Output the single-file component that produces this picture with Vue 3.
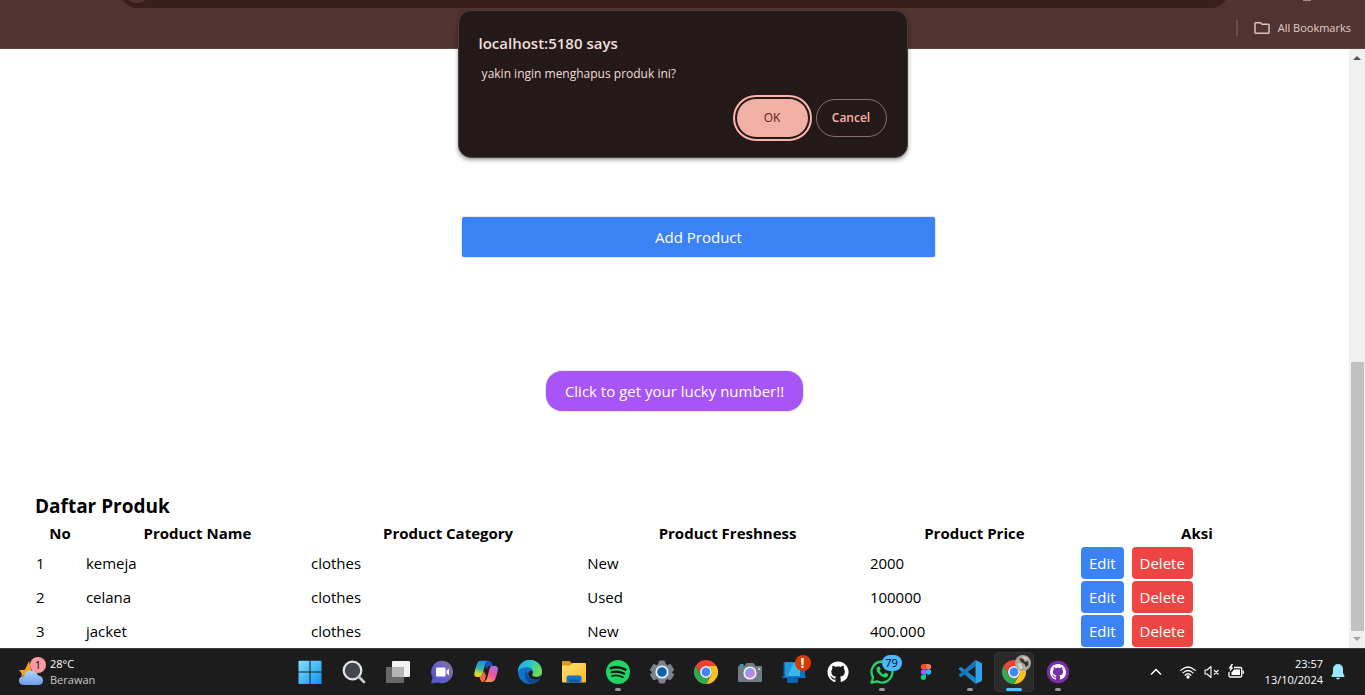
<script setup>
import { ref } from 'vue'

const products = ref([
  { name: 'kemeja', category: 'clothes', freshness: 'New', price: '2000' },
  { name: 'celana', category: 'clothes', freshness: 'Used', price: '100000' },
  { name: 'jacket', category: 'clothes', freshness: 'New', price: '400.000' },
])

const githubMark =
  'M8 0C3.58 0 0 3.58 0 8c0 3.54 2.29 6.53 5.47 7.59.4.07.55-.17.55-.38 0-.19-.01-.82-.01-1.49-2.01.37-2.53-.49-2.69-.94-.09-.23-.48-.94-.82-1.13-.28-.15-.68-.52-.01-.53.63-.01 1.08.58 1.23.82.72 1.21 1.87.87 2.33.66.07-.52.28-.87.51-1.07-1.78-.2-3.64-.89-3.64-3.95 0-.87.31-1.59.82-2.15-.08-.2-.36-1.02.08-2.12 0 0 .67-.21 2.2.82.64-.18 1.32-.27 2-.27s1.36.09 2 .27c1.53-1.04 2.2-.82 2.2-.82.44 1.1.16 1.92.08 2.12.51.56.82 1.27.82 2.15 0 3.07-1.87 3.75-3.65 3.95.29.25.54.73.54 1.48 0 1.07-.01 1.93-.01 2.2 0 .21.15.46.55.38A8.01 8.01 0 0 0 16 8c0-4.42-3.58-8-8-8Z'
</script>

<template>
  <div class="screen">
    <header class="chrome">
      <div class="toolbar">
        <div class="omnibox"><span class="site-info"></span></div>
        <span class="menu-dot"></span>
      </div>
      <nav class="bookmarks">
        <span class="divider"></span>
        <button class="all-bookmarks" type="button">
          <svg width="16" height="12" viewBox="0 0 16 12" fill="none" stroke="#dcc4be" stroke-width="1.5" stroke-linejoin="round">
            <path d="M1 1.5V10.5Q1 11.2 1.700 11.2H14.300Q15 11.2 15 10.5V3Q15 2.300 14.300 2.300H8L6.500 .8H1.700Q1 .8 1 1.500Z" />
          </svg>
          All Bookmarks
        </button>
      </nav>
    </header>

    <div class="viewport">
      <main class="page">
        <form class="product-form" @submit.prevent>
          <button class="add" type="submit">Add Product</button>
        </form>
        <button class="lucky" type="button">Click to get your lucky number!!</button>
        <section class="listing">
          <h2>Daftar Produk</h2>
          <table>
            <colgroup>
              <col class="c-no" /><col class="c-name" /><col class="c-category" />
              <col class="c-fresh" /><col class="c-price" /><col class="c-action" />
            </colgroup>
            <thead>
              <tr>
                <th>No</th>
                <th>Product Name</th>
                <th>Product Category</th>
                <th>Product Freshness</th>
                <th>Product Price</th>
                <th>Aksi</th>
              </tr>
            </thead>
            <tbody>
              <tr v-for="(p, i) in products" :key="p.name">
                <td>{{ i + 1 }}</td>
                <td>{{ p.name }}</td>
                <td>{{ p.category }}</td>
                <td>{{ p.freshness }}</td>
                <td>{{ p.price }}</td>
                <td>
                  <div class="actions">
                    <button class="edit" type="button">Edit</button>
                    <button class="delete" type="button">Delete</button>
                  </div>
                </td>
              </tr>
            </tbody>
          </table>
        </section>
      </main>
      <div class="scrollbar">
        <svg class="arrow" viewBox="0 0 16 17"><path d="M4 11L8 7L12 11Z" fill="#505050" /></svg>
        <div class="track"><div class="thumb"></div></div>
        <svg class="arrow" viewBox="0 0 16 17"><path d="M4 6L8 10L12 6Z" fill="#a3a3a3" /></svg>
      </div>
    </div>

    <footer class="taskbar">
      <button class="weather" type="button">
        <span class="weather-icon">
          <svg width="26" height="30" viewBox="0 0 26 30">
            <defs>
              <linearGradient id="cloud" x1="0" y1="0" x2="0" y2="1">
                <stop offset="0" stop-color="#b4d2fb" /><stop offset="1" stop-color="#6f9be8" />
              </linearGradient>
            </defs>
            <path d="M11 4L8.500 9.500L6.500 13L1 13L4 17L3 19.500L14 16Z" fill="#f5a11c" />
            <path d="M6.500 28Q1 28 1 23.500Q1 19.500 6 19Q7 13.500 13 13.500Q18.500 13.500 20 18.500Q25 19 25 23.500Q25 28 19.500 28Z" fill="url(#cloud)" />
          </svg>
          <span class="weather-badge">1</span>
        </span>
        <span class="weather-text"><span class="temp">28°C</span><span>Berawan</span></span>
      </button>

      <div class="apps">
        <button type="button" aria-label="Start">
          <svg viewBox="0 0 24 24">
            <defs>
              <linearGradient id="win" x1="0" y1="0" x2="1" y2="1">
                <stop offset="0" stop-color="#85e0fd" /><stop offset="1" stop-color="#0c93f2" />
              </linearGradient>
            </defs>
            <path d="M.5 1.500Q.5 .8 1.300 .8H11.500V11.500H.5ZM12.500 .8H22.700Q23.500 .8 23.500 1.500V11.500H12.500ZM.5 12.500H11.500V24H1.300Q.5 24 .5 23.200ZM12.500 12.500H23.500V23.200Q23.500 24 22.700 24H12.500Z" fill="url(#win)" />
          </svg>
        </button>
        <button type="button" aria-label="Search">
          <svg viewBox="0 0 24 24">
            <circle cx="10.500" cy="10.500" r="8.800" fill="#42464a" stroke="#e2e5e8" stroke-width="2.200" />
            <path d="M17 17L22 22" stroke="#c3c7ca" stroke-width="2.800" stroke-linecap="round" />
          </svg>
        </button>
        <button type="button" aria-label="Task view">
          <svg viewBox="0 0 24 24">
            <rect x="6" y="1" width="18" height="16" rx="1" fill="#f2f2f2" />
            <rect x="0" y="7" width="18" height="16" rx="1" fill="#686868" />
            <path d="M6 7H17Q18 7 18 8V17H6Z" fill="#b5b5b5" />
          </svg>
        </button>
        <button type="button" aria-label="Chat">
          <svg viewBox="0 0 24 24">
            <defs>
              <linearGradient id="chat" x1="1" y1="0" x2="0" y2="1">
                <stop offset="0" stop-color="#8f6fa8" /><stop offset=".5" stop-color="#6760c8" /><stop offset="1" stop-color="#4f56c5" />
              </linearGradient>
            </defs>
            <path d="M12.500 .8A11.200 11.200 0 1 1 8 22.500L1.800 23.500Q1 23.500 1.200 22.500L2.600 17.500A11.200 11.200 0 0 1 12.500 .8Z" fill="url(#chat)" />
            <rect x="6" y="7.500" width="9.500" height="9" rx="1.200" fill="#fff" />
            <path d="M16.500 10.800L19 8.500V15.500L16.500 13.200Z" fill="#fff" />
          </svg>
        </button>
        <button type="button" aria-label="Copilot">
          <svg viewBox="0 0 24 24">
            <defs>
              <linearGradient id="cop1" x1=".5" y1="0" x2=".3" y2="1">
                <stop offset="0" stop-color="#168de8" /><stop offset=".5" stop-color="#37b9a0" /><stop offset=".8" stop-color="#d5d934" /><stop offset="1" stop-color="#ffc21a" />
              </linearGradient>
              <linearGradient id="cop2" x1=".8" y1="0" x2=".2" y2="1">
                <stop offset="0" stop-color="#a66cf0" /><stop offset=".5" stop-color="#f0549c" /><stop offset="1" stop-color="#ff9b48" />
              </linearGradient>
            </defs>
            <path d="M11 6L13.500 .8Q17 .8 18 4L18.600 6H15.500Q13.500 6 12.700 9Z" fill="#1650c0" />
            <path d="M6.500 .8H14Q12 1.500 11 5L8.500 14Q7.700 17 5 17H3Q0 17 .3 13.500Q.8 9.500 3 4Q4 .8 6.500 .8Z" fill="url(#cop1)" />
            <path d="M17.500 6H21Q24 6 23.900 9.500Q23.500 13.500 21.300 19Q20 22 17.500 22H10.500Q12.300 21 13.300 17.500L15.500 9Q16 6.500 17.500 6Z" fill="url(#cop2)" />
            <path d="M5.500 17Q8 16.800 8.800 14L9.500 11L12 15.500L11 19.500Q10.500 22 8.800 22Q7 22 6.300 19.500Z" fill="#f26a4c" />
          </svg>
        </button>
        <button type="button" aria-label="Edge">
          <svg viewBox="0 0 24 24">
            <defs>
              <linearGradient id="edge1" x1="0" y1="0" x2="1" y2=".4">
                <stop offset="0" stop-color="#1ba5e4" /><stop offset=".5" stop-color="#2cc5d2" /><stop offset="1" stop-color="#6ddd4c" />
              </linearGradient>
            </defs>
            <circle cx="12" cy="12" r="12" fill="#1272c8" />
            <path d="M0 11.500A12 12 0 0 1 24 12Q24 17 18.500 17Q14 17 14 14.800Q15.500 13.500 15 11Q14 7.500 9.500 7Q3 7 0 11.500Z" fill="url(#edge1)" />
            <path d="M8 12.500Q8 8.500 11.500 8.200Q6.500 9.500 6.800 15Q7.500 21 13.500 23.900Q9 23 7.500 19.500Q6 16 8 12.500Z" fill="#0d4f9d" />
            <path d="M9.300 12Q8.500 19 16 19.800Q19.500 20 22.300 18.200Q19 23.800 13 24Q7.500 20.500 7.500 15.500Q7.600 13 9.300 12Z" fill="#114a8f" />
            <path d="M14 14.500Q14 17 18.500 17Q21.500 17 23.200 15L22.200 18.200Q19.500 20 16 19.500Q10 18.500 10.200 13Q11 10.500 13.500 10.500Q15.800 12 14 14.500Z" fill="#1e1e1e" />
          </svg>
        </button>
        <button type="button" aria-label="File Explorer">
          <svg viewBox="0 0 24 24">
            <defs>
              <linearGradient id="folder" x1="0" y1="0" x2="1" y2="1">
                <stop offset="0" stop-color="#ffe27a" /><stop offset="1" stop-color="#fdb81e" />
              </linearGradient>
            </defs>
            <path d="M0 2Q0 1 1 1H7.500L10.500 4H23Q24 4 24 5V10H0Z" fill="#d9990f" />
            <path d="M0 5.500H8L10.500 3H23Q24 3 24 4V21.500Q24 22.500 23 22.500H1Q0 22.500 0 21.500Z" fill="url(#folder)" />
            <path d="M4.500 22.500V17.500Q4.500 15.500 6.500 15.500H17.500Q19.500 15.500 19.500 17.500V22.500Z" fill="#1576c9" />
            <path d="M7.500 19.500H16.500Q17 19.500 17 20V22.500H7V20Q7 19.500 7.500 19.500Z" fill="#0f569d" />
          </svg>
        </button>
        <button type="button" aria-label="Spotify">
          <svg viewBox="0 0 24 24">
            <circle cx="12" cy="12" r="12" fill="#1ed760" />
            <g fill="none" stroke="#111" stroke-linecap="round">
              <path d="M4.800 8.200Q12.500 5.900 19.500 9.700" stroke-width="2.500" />
              <path d="M5.500 12.300Q12 10.400 18.200 13.600" stroke-width="2.100" />
              <path d="M6 16Q11.800 14.500 16.900 17.200" stroke-width="1.700" />
            </g>
          </svg>
          <i class="running"></i>
        </button>
        <button type="button" aria-label="Settings">
          <svg viewBox="0 0 24 24">
            <path d="M9.500 1H14.500L15.300 4.300L17.300 5.500L20.500 4.500L23.800 10L21.300 12.300L23.800 14.500L20.500 19.800L17.300 18.700L15.300 19.800L14.500 23H9.500L8.700 19.800L6.700 18.700L3.500 19.800L.2 14.500L2.700 12.300L.2 10L3.500 4.500L6.700 5.500L8.700 4.300Z" fill="#7b838c" stroke="#7b838c" stroke-linejoin="round" />
            <circle cx="12" cy="12" r="5.700" fill="#0d5fb0" stroke="#eef1f4" stroke-width="1.800" />
          </svg>
        </button>
        <button type="button" aria-label="Chrome">
          <svg viewBox="0 0 24 24">
            <path d="M1.600 6A12 12 0 0 1 22.400 6H12A6 6 0 0 0 6.800 15Z" fill="#ea4335" />
            <path d="M22.400 6A12 12 0 0 1 12 24L17.200 15A6 6 0 0 0 12 6Z" fill="#fbc116" />
            <path d="M12 24A12 12 0 0 1 1.600 6L6.800 15A6 6 0 0 0 17.200 15Z" fill="#34a853" />
            <circle cx="12" cy="12" r="5.200" fill="#4285f4" stroke="#fff" stroke-width="1.500" />
          </svg>
        </button>
        <button type="button" aria-label="Camera">
          <svg viewBox="0 0 24 24">
            <defs>
              <linearGradient id="lens" x1="0" y1="0" x2="1" y2="1">
                <stop offset="0" stop-color="#53b7f1" /><stop offset=".5" stop-color="#a98de8" /><stop offset="1" stop-color="#ed79d8" />
              </linearGradient>
            </defs>
            <path d="M1.500 6Q1.500 4 3.500 4H5.500V7H1.500Z" fill="#31a6e4" />
            <path d="M0 7Q0 6 1 6H6.500L8 3.500Q8.300 3 9 3H15Q15.700 3 16 3.500L17.500 6H23Q24 6 24 7V21Q24 22 23 22H1Q0 22 0 21Z" fill="#727c86" />
            <circle cx="21" cy="9" r="1" fill="#d2d7dc" />
            <circle cx="12" cy="13" r="5.800" fill="url(#lens)" stroke="#f2f4f7" stroke-width="1.600" />
          </svg>
        </button>
        <button type="button" aria-label="Phone Link">
          <svg viewBox="0 0 24 24">
            <rect x="1.500" y="2" width="12" height="15" rx="1" fill="#1167b3" />
            <path d="M17 5H22Q23 5 23 6V16L24 18H0V16.500H17Z" fill="#1370c4" />
            <rect x="3" y="2.500" width="15" height="14" rx="1" fill="#38b7eb" />
            <path d="M3 3.500Q3 2.500 4 2.500H12L5 16.500H3Z" fill="#1f95de" />
            <path d="M5 16.500H16V22Q16 23 15 23H6Q5 23 5 22Z" fill="#0c64b4" />
          </svg>
          <span class="badge alert">!</span>
        </button>
        <button type="button" aria-label="GitHub">
          <svg viewBox="0 0 24 24">
            <path :d="githubMark" fill="#fff" transform="translate(1.500 1.500) scale(1.320)" />
          </svg>
        </button>
        <button type="button" aria-label="WhatsApp">
          <svg viewBox="0 0 24 24">
            <path d="M12 1.500A10.500 10.500 0 1 1 7 21.300L1.500 22.700L3 17.300A10.500 10.500 0 0 1 12 1.500Z" fill="none" stroke="#25d366" stroke-width="2.300" stroke-linejoin="round" />
            <path d="M8 6.500Q9.500 6 10 7.500L10.600 9Q10.700 9.700 9.700 10.700Q11 13.300 13.700 14.400L15 13Q15.400 12.700 16 13L18 14Q18.400 14.300 18 15.500Q17.200 17.500 15 17.400Q9.500 16.600 6.700 10.800Q5.700 8.300 8 6.500Z" fill="#25d366" />
          </svg>
          <span class="badge count">79</span>
          <i class="running"></i>
        </button>
        <button type="button" aria-label="Figma">
          <svg viewBox="0 0 24 24">
            <path d="M9.500 4H12V9.300H9.500A2.650 2.650 0 0 1 9.500 4Z" fill="#f24e1e" />
            <path d="M12 4H14.500A2.650 2.650 0 0 1 14.500 9.300H12Z" fill="#ff7262" />
            <path d="M9.500 9.300H12V14.600H9.500A2.650 2.650 0 0 1 9.500 9.300Z" fill="#a259ff" />
            <circle cx="14.600" cy="12" r="2.650" fill="#1abcfe" />
            <path d="M9.500 14.600H12V17.300A2.650 2.650 0 1 1 9.500 14.600Z" fill="#0acf83" />
          </svg>
        </button>
        <button type="button" aria-label="Visual Studio Code">
          <svg viewBox="0 0 24 24">
            <path d="M17.500 24L1 9.500Q.4 8.900 1 8.300L2.200 7.200Q2.800 6.800 3.400 7.200L17.500 17.700Z" fill="#1f83ca" />
            <path d="M1 15.700L2.200 16.800Q2.800 17.200 3.400 16.800L17.500 6.300V0L1 14.500Q.4 15.100 1 15.700Z" fill="#1677b8" />
            <path d="M17.500 0L23.200 2.700Q24 3.100 24 4V20Q24 20.900 23.200 21.300L17.500 24Z" fill="#2ea3ea" />
          </svg>
          <i class="running"></i>
        </button>
        <button type="button" class="active" aria-label="Chrome window">
          <svg viewBox="0 0 24 24">
            <path d="M1.600 6A12 12 0 0 1 22.400 6H12A6 6 0 0 0 6.800 15Z" fill="#ea4335" />
            <path d="M22.400 6A12 12 0 0 1 12 24L17.200 15A6 6 0 0 0 12 6Z" fill="#fbc116" />
            <path d="M12 24A12 12 0 0 1 1.600 6L6.800 15A6 6 0 0 0 17.200 15Z" fill="#34a853" />
            <circle cx="12" cy="12" r="5.200" fill="#4285f4" stroke="#fff" stroke-width="1.500" />
          </svg>
          <svg class="profile" viewBox="0 0 16 16">
            <circle cx="8" cy="8" r="8" fill="#aca79b" />
            <path d="M4 3L8 4L10 7L13 6L13.500 10L11 12L9.500 9L6 7Z" fill="#34332f" />
            <path d="M8 1L13 3L11.500 5L8.500 3ZM2 8L6 8.500L8 13L5 14.500Z" fill="#d5d0c4" />
          </svg>
          <i class="running"></i>
        </button>
        <button type="button" aria-label="GitHub Desktop">
          <svg viewBox="0 0 24 24">
            <circle cx="12" cy="12" r="11.200" fill="#7a2fa5" />
            <path :d="githubMark" fill="#fff" transform="translate(4 4)" />
          </svg>
          <i class="running"></i>
        </button>
      </div>

      <div class="tray">
        <button type="button" class="chevron" aria-label="Hidden icons">
          <svg width="12" height="8" viewBox="0 0 12 8"><path d="M1 6.500L6 1.500L11 6.500" fill="none" stroke="#fff" stroke-width="1.500" /></svg>
        </button>
        <button type="button" class="status" aria-label="Network, sound and battery">
          <svg width="16" height="16" viewBox="0 0 16 16" fill="none" stroke="#fff" stroke-width="1.300" stroke-linecap="round">
            <path d="M.8 6.400Q8-.5 15.200 6.400M3 8.900Q8 4 13 8.900M5.200 11.200Q8 8.400 10.800 11.200" />
            <circle cx="8" cy="13" r="1" fill="#fff" />
          </svg>
          <svg width="16" height="16" viewBox="0 0 16 16" fill="none" stroke="#fff" stroke-width="1.100" stroke-linejoin="round">
            <path d="M1 6H3L7 2.500V13.500L3 10H1ZM10 6L14.500 10.500M14.500 6L10 10.500" />
          </svg>
          <svg width="16" height="16" viewBox="0 0 16 16" fill="none" stroke="#fff" stroke-width="1.300">
            <path d="M6 3.500H12.500Q13.700 3.500 13.700 5V11.500Q13.700 13 12.500 13H2.500Q1 13 1 11.500V8" />
            <path d="M6 5.500H12V11H3.500V8.500Z" fill="#fff" stroke="none" />
            <path d="M15.200 6.500V10" />
            <path d="M3.500 0L.5 4.500H2.500L1.500 8L5.500 3.500H3.500L5 0Z" fill="#fff" stroke="none" />
          </svg>
        </button>
        <button type="button" class="clock"><span>23:57</span><span>13/10/2024</span></button>
        <button type="button" class="bell" aria-label="Notifications">
          <svg width="14" height="16" viewBox="0 0 14 16" fill="#98e8ff">
            <path d="M7 0A5 5 0 0 1 12 5V9L13.500 12Q13.500 13 12.800 13H1.200Q.5 13 .5 12L2 9V5A5 5 0 0 1 7 0ZM4.800 13.800H9.200Q8.500 15.500 7 15.500Q5.500 15.500 4.800 13.800Z" />
          </svg>
        </button>
      </div>
    </footer>

    <div class="dialog" role="alertdialog" aria-labelledby="dlg-title" aria-describedby="dlg-text">
      <h1 id="dlg-title">localhost:5180 says</h1>
      <p id="dlg-text">&nbsp;yakin ingin menghapus produk ini?</p>
      <div class="dialog-actions">
        <button class="ok" type="button">OK</button>
        <button class="cancel" type="button">Cancel</button>
      </div>
    </div>
  </div>
</template>

<style>
body {
  background: #fff;
}
</style>

<style scoped>
.screen {
  position: relative;
  display: flex;
  flex-direction: column;
  height: 100vh;
  overflow: hidden;
  font-family: "Open Sans", "Noto Sans", sans-serif;
  font-size: 15px;
  line-height: 24px;
  color: #000;
}
* {
  box-sizing: border-box;
}
button {
  font: inherit;
  color: inherit;
  background: none;
  border: 0;
  padding: 0;
  margin: 0;
}
svg {
  display: block;
}

/* Browser chrome */
.chrome {
  background: #51342f;
  border-bottom: 1px solid #5c4440;
}
.toolbar {
  display: flex;
  align-items: flex-end;
  height: 8px;
  padding: 0 54px 0 120px;
  overflow: hidden;
}
.omnibox {
  display: flex;
  align-items: center;
  flex: 1;
  height: 34px;
  padding: 0 4px;
  border-radius: 17px;
  background: #3a1e1a;
}
.site-info {
  width: 26px;
  height: 24px;
  border-radius: 12px;
  background: #51342f;
}
.menu-dot {
  align-self: flex-start;
  width: 8px;
  height: 1px;
  margin-left: 75px;
  background: #a98b84;
}
.bookmarks {
  display: flex;
  align-items: center;
  justify-content: flex-end;
  gap: 16px;
  height: 40px;
  padding-right: 14px;
}
.divider {
  width: 2px;
  height: 16px;
  background: #6f4c46;
}
.all-bookmarks {
  display: flex;
  align-items: center;
  gap: 8px;
  font-size: 11px;
  color: #e4d0cb;
}

/* Page */
.viewport {
  display: flex;
  flex: 1;
  min-height: 0;
}
.page {
  display: flex;
  flex: 1;
  flex-direction: column;
  align-items: center;
  min-width: 0;
  padding-top: 168px;
  overflow: hidden;
}
.product-form {
  display: flex;
  justify-content: center;
  align-self: stretch;
  padding-left: 48px;
}
.add {
  width: 473px;
  height: 40px;
  border-radius: 2px;
  background: #3b82f6;
  color: #fff;
  box-shadow: 0 0 0 1px #e5e7eb;
}
.lucky {
  height: 40px;
  margin-top: 114px;
  padding: 0 19px;
  border-radius: 16px;
  background: #a855f7;
  color: #fff;
  box-shadow: 0 0 0 1px #e5e7eb;
}
.listing {
  align-self: stretch;
  margin-top: 82px;
  padding: 0 35px;
}
h2 {
  margin: 0;
  font-size: 19px;
  font-weight: 700;
  line-height: 27px;
}
table {
  width: 100%;
  table-layout: fixed;
  border-collapse: collapse;
}
th,
td {
  padding: 1px;
}
th {
  font-weight: 700;
}
.c-no { width: 3.9%; }
.c-name { width: 17.6%; }
.c-category { width: 21.6%; }
.c-fresh { width: 22.1%; }
.c-price { width: 16.5%; }
.c-action { width: 18.3%; }
.actions {
  display: flex;
  gap: 8px;
}
.edit,
.delete {
  height: 32px;
  padding: 0 8px;
  border-radius: 4px;
  color: #fff;
}
.edit {
  background: #3b82f6;
}
.delete {
  background: #ef4444;
}
.scrollbar {
  display: flex;
  flex-direction: column;
  width: 16px;
  background: #f0f0f0;
}
.arrow {
  height: 17px;
}
.track {
  display: flex;
  flex: 1;
  flex-direction: column;
  justify-content: flex-end;
  padding: 0 1px 0 2px;
}
.thumb {
  height: 47.6%;
  background: #c1c1c1;
}

/* Taskbar */
.taskbar {
  display: grid;
  grid-template-columns: 1fr auto 1fr;
  height: 47px;
  padding-left: 2px;
  border-top: 1px solid #3c3c3c;
  background: #1c1c1c;
  color: #fff;
  font-size: 11px;
  line-height: 16px;
}
.weather {
  display: flex;
  align-items: center;
  gap: 6px;
  padding-left: 16px;
  text-align: left;
}
.weather-icon {
  position: relative;
}
.weather-badge {
  position: absolute;
  top: 0;
  right: -2px;
  width: 16px;
  height: 16px;
  border-radius: 8px;
  background: #ff99a4;
  color: #000;
  text-align: center;
}
.weather-text {
  display: flex;
  flex-direction: column;
  color: #c8c8c8;
}
.temp {
  color: #fff;
}
.apps {
  display: flex;
}
.apps button {
  position: relative;
  display: grid;
  place-items: center;
  width: 44px;
}
.apps svg {
  width: 24px;
  height: 24px;
}
.active::before {
  content: "";
  position: absolute;
  inset: 3px 2px;
  border: 1px solid #333;
  border-radius: 4px;
  background: #2a2a2a;
}
.active svg {
  position: relative;
}
.apps .profile {
  position: absolute;
  top: 6px;
  right: 5px;
  width: 16px;
  height: 16px;
}
.running {
  position: absolute;
  bottom: 4px;
  left: 19px;
  width: 6px;
  height: 3px;
  border-radius: 2px;
  background: #9a9a9a;
}
.active .running {
  left: 14px;
  width: 16px;
  background: #4cc2ff;
}
.badge {
  position: absolute;
  top: 6px;
  height: 16px;
  border-radius: 8px;
}
.alert {
  right: 5px;
  width: 16px;
  background: #d83b01;
  font-size: 14px;
  font-weight: 700;
}
.count {
  right: 2px;
  width: 20px;
  background: #4cb8ff;
  color: #000;
}
.tray {
  display: flex;
  align-items: center;
  justify-content: flex-end;
  padding-right: 20px;
}
.chevron {
  margin-right: 18px;
}
.status {
  display: flex;
  gap: 8px;
  margin-right: 21px;
}
.clock {
  display: flex;
  flex-direction: column;
  margin-right: 8px;
  text-align: right;
}

/* Confirm dialog */
.dialog {
  position: absolute;
  top: 10px;
  left: 50%;
  width: 450px;
  margin-left: -225px;
  padding: 20px;
  border: 1px solid #4b403e;
  border-radius: 13px;
  background: #231918;
  box-shadow: 0 2px 4px rgba(0, 0, 0, 0.4);
  color: #f1dfdb;
}
.dialog h1 {
  margin: 0;
  font-size: 15px;
  font-weight: 600;
  line-height: 24px;
}
.dialog p {
  margin: 9px 0 0;
  font-size: 12px;
  line-height: 20px;
}
.dialog-actions {
  display: flex;
  justify-content: flex-end;
  gap: 8px;
  margin-top: 15px;
  font-size: 12px;
}
.dialog-actions button {
  width: 71px;
  height: 38px;
  border-radius: 19px;
}
.ok {
  background: #f0b0a6;
  color: #5a1d16;
  outline: 2px solid #ffb4a8;
  outline-offset: 2px;
}
.dialog-actions .cancel {
  border: 1px solid #85706c;
  color: #ffb4a8;
  font-weight: 600;
}
</style>
